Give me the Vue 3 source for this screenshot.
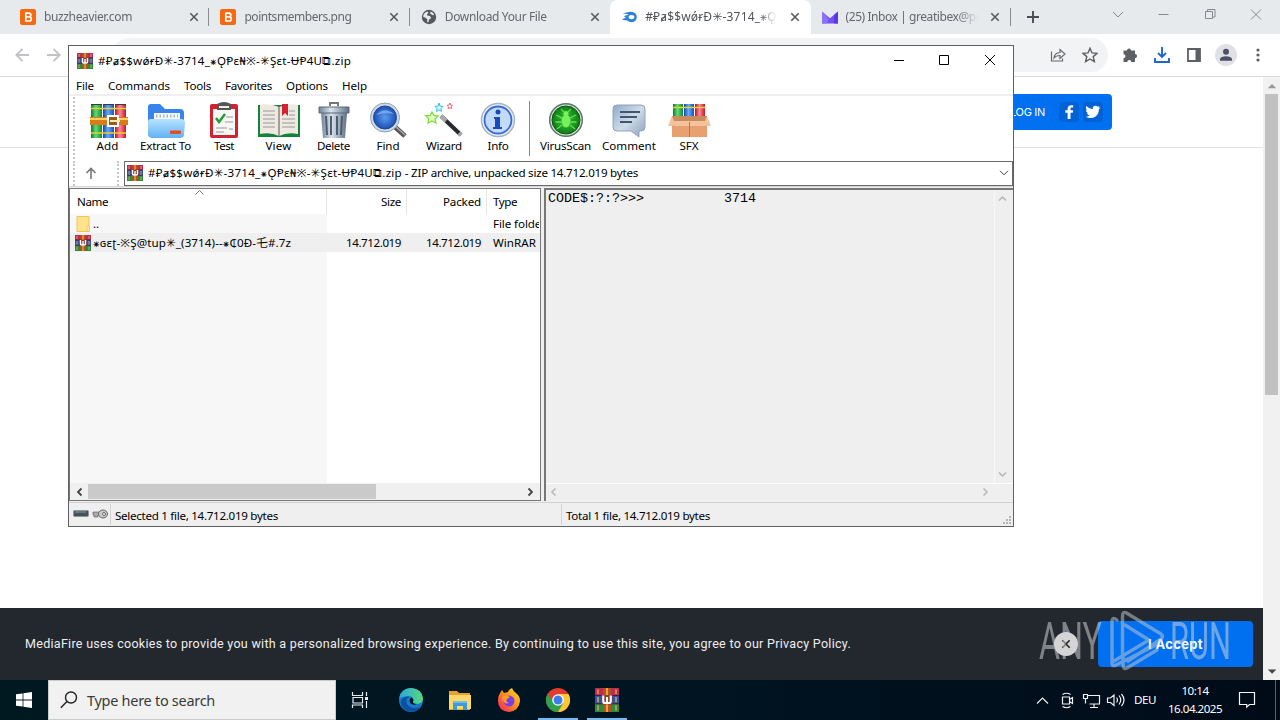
<script setup>
const archive = '#₽ⱥ$$wǿɍÐ✳-3714_⁕ǪⱣɛ₦※-✳Şɛt-ɄⱣ4U⧉.zip'
const tabs = [
  { title: 'buzzheavier.com', w: 88, icon: 'bz' },
  { title: 'pointsmembers.png', w: 107, icon: 'bz' },
  { title: 'Download Your File', w: 102, icon: 'globe' },
  { title: '#₽ⱥ$$wǿɍÐ✳-3714_⁕ǪⱣɛ', w: 145, icon: 'mf', active: true },
  { title: '(25) Inbox | greatibex@proton', w: 159, icon: 'mail' },
]
const menu = [['File', 18], ['Commands', 62], ['Tools', 27], ['Favorites', 47], ['Options', 42], ['Help', 25]]
const tools = [
  { t: 'Add', c: 't-add', w: 22 }, { t: 'Extract To', c: 't-extract', w: 51 },
  { t: 'Test', c: 't-test', w: 20 }, { t: 'View', c: 't-view', w: 26 },
  { t: 'Delete', c: 't-delete', w: 33 }, { t: 'Find', c: 't-find', w: 23 },
  { t: 'Wizard', c: 't-wizard', w: 36 }, { t: 'Info', c: 't-info', w: 21 },
  { sep: true, c: 't-sep' },
  { t: 'VirusScan', c: 't-virus', w: 51 }, { t: 'Comment', c: 't-comment', w: 54 },
  { t: 'SFX', c: 't-sfx', w: 19 },
]
// Spreads the letters of a label so that it fills the given width.
const fit = (el, { value }) => {
  el.style.letterSpacing = '0px'
  const natural = el.getBoundingClientRect().width
  el.style.letterSpacing = '1px'
  const count = el.getBoundingClientRect().width - natural
  el.style.letterSpacing = (value - natural) / Math.max(count, 1) + 'px'
}
const vFit = { mounted: fit }
</script>

<template>
  <div class="screen">
    <svg class="defs" width="0" height="0">
      <defs>
        <linearGradient id="gfold" x1="0" y1="0" x2="0" y2="1"><stop offset="0" stop-color="#b8e3ff" /><stop offset="1" stop-color="#62b2f6" /></linearGradient>
        <linearGradient id="gsteel" x1="0" y1="0" x2="1" y2="0"><stop offset="0" stop-color="#6f8296" /><stop offset=".4" stop-color="#dbe4ec" /><stop offset="1" stop-color="#5e7184" /></linearGradient>
        <linearGradient id="gcom" x1="0" y1="0" x2="1" y2="1"><stop offset="0" stop-color="#8fa9c8" /><stop offset=".5" stop-color="#cfdcea" /><stop offset="1" stop-color="#8aa0bb" /></linearGradient>
        <linearGradient id="gedge" x1="0" y1="0" x2="1" y2="0"><stop offset="0" stop-color="#2aa8e0" /><stop offset="1" stop-color="#57d878" /></linearGradient>
        <linearGradient id="gfire" x1="1" y1="0" x2="0" y2="1"><stop offset="0" stop-color="#ffe226" /><stop offset=".5" stop-color="#ff8a1e" /><stop offset="1" stop-color="#f5156c" /></linearGradient>
        <linearGradient id="gr" x1="0" y1="0" x2="1" y2="0"><stop offset="0" stop-color="#b80f2c" /><stop offset=".45" stop-color="#ff8a96" /><stop offset="1" stop-color="#c4122f" /></linearGradient>
        <linearGradient id="gg" x1="0" y1="0" x2="1" y2="0"><stop offset="0" stop-color="#0c7d26" /><stop offset=".45" stop-color="#63d97a" /><stop offset="1" stop-color="#0f8a2b" /></linearGradient>
        <linearGradient id="gb" x1="0" y1="0" x2="1" y2="0"><stop offset="0" stop-color="#1049ad" /><stop offset=".45" stop-color="#6aa8fa" /><stop offset="1" stop-color="#1350bd" /></linearGradient>
        <radialGradient id="glens"><stop offset="0" stop-color="#5c9bf0" /><stop offset="1" stop-color="#1c4fb5" /></radialGradient>
        <radialGradient id="ggreen"><stop offset="0" stop-color="#48d63c" /><stop offset="1" stop-color="#0a7a14" /></radialGradient>
      </defs>
      <symbol id="rar" viewBox="0 0 16 16">
        <rect y="0" width="16" height="5" fill="#c22b50" /><rect y="5" width="16" height="5.5" fill="#2f55a8" /><rect y="10.5" width="16" height="5.5" fill="#2c8a3b" />
        <path d="M0 5h16M0 10.5h16" stroke="#3b2340" stroke-width=".8" />
        <path d="M2 1v3M2 6v3.500M2 11.500v3.500M14 1v3M14 6v3.500M14 11.500v3.500" stroke="#d9a060" stroke-width="1" />
        <rect x="5.4" width="5.2" height="16" fill="#b4511d" /><path d="M8 0v16" stroke="#e9a33b" stroke-width="1.400" />
        <rect x="4.4" y="4.7" width="7.2" height="6.2" fill="#8c3a2c" /><path d="M5.5 5v3.8q0 1.2 1.3 1.2h2.4q1.3 0 1.3-1.2V5M8 6v3.5" fill="none" stroke="#fff" stroke-width="1.4" />
      </symbol>
      <symbol id="close" viewBox="0 0 10 10"><path d="M1.3 1.3l7.4 7.4M8.7 1.3l-7.4 7.4" stroke="currentColor" stroke-width="1.6" fill="none" /></symbol>
    </svg>

    <div class="chrome">
      <div class="tabstrip">
        <div v-for="(t, i) in tabs" :key="i" class="tab" :class="{ active: t.active, bare: i === 2 }">
          <svg v-if="t.icon === 'bz'" class="fav" viewBox="0 0 16 16"><rect width="16" height="16" rx="2" fill="#f6690f" /><path d="M5.8 4.2h3q2 0 2 1.8 0 1.5-1.5 1.8 2 .2 2 2.1 0 2.1-2.5 2.1h-3z" fill="none" stroke="#fff" stroke-width="1.7" /><path d="M6 7.9h3.5" stroke="#fff" stroke-width="1.5" /></svg>
          <svg v-else-if="t.icon === 'globe'" class="fav" viewBox="0 0 16 16"><circle cx="8" cy="8" r="7.2" fill="#55595e" /><path d="M2.6 5.2q1.6-2.4 4-2.8l.8 1.6-1.5 1.2.4 1.3 2.8.4 1 2.3-2 1.3-.7 2.7-1.3-.2.2-2.8-2.2-1.6-1.9-.6zM9.5 2.6q3 .8 3.8 3.7l-2-.3-2.2-1.6z" fill="#e7eaed" /></svg>
          <svg v-else-if="t.icon === 'mf'" class="fav" viewBox="0 0 16 16"><path d="M1.3 5.2Q5 2.6 9.7 2.7 15.6 3 15.8 8q-.2 5-5.3 5.2-2.7 0-4.4-1.8L.8 10.8Q3 9 5 8.7L3 7.3Q5.6 5.7 8 6L5.3 4.8Q3 4.6 1.3 5.2z" fill="#2c80dd" /><ellipse cx="10.5" cy="8.1" rx="2.9" ry="2.1" fill="#fff" /></svg>
          <svg v-else class="fav" viewBox="0 0 16 16"><path d="M0 2.5l8 6.8 8-6.8v12H0z" fill="#7250f2" /><path d="M0 2.5l6.8 7.8-2 4.2H0z" fill="#8d72fb" /><path d="M16 2.5v12h-4V6z" fill="#5838e5" /></svg>
          <div class="tabtext"><span v-fit="t.w">{{ t.title }}</span></div>
          <svg class="tabx"><use href="#close" /></svg>
        </div>
        <svg class="plus" viewBox="0 0 12 12"><path d="M6 0v12M0 6h12" stroke="#4a4e52" stroke-width="1.9" /></svg>
        <svg class="winctl" viewBox="0 0 160 20" fill="none" stroke="#85898d"><path d="M4 7l5 5 5-5M49.500 9.500h10" /><path d="M96.500 6.500h7v7h-7zM98.500 6.500v-2h7.500v7.500h-2.500" /><path d="M142 4.500l10 10M152 4.500l-10 10" /></svg>
      </div>

      <div class="toolbar">
        <svg class="nav" viewBox="0 0 48 16" fill="none" stroke="#c0c2c5" stroke-width="1.8"><path d="M14 8H1.500M7.500 1.800L1.300 8l6.200 6.200M32 8h12.500M38.500 1.800L44.700 8l-6.200 6.200" /></svg>
        <div class="omnibox">
          <svg class="o1" viewBox="0 0 16 16" fill="none" stroke="#65696d" stroke-width="1.2"><path d="M1.500 4.500v9.500h11v-2.500M4 11q.5-5 6-5.500V2.500l5 4.500-5 4.500V8.500Q6 8.500 4 11z" /></svg>
          <svg class="o2" viewBox="0 0 16 16" fill="none" stroke="#5b5f63" stroke-width="1.4"><path d="M8 1.200l2 4.700 5.100.4-3.900 3.300 1.200 5L8 12l-4.400 2.600 1.200-5L.9 6.300 6 5.900z" /></svg>
        </div>
        <svg class="ext" viewBox="0 0 16 16"><path d="M5 3.500a2 2 0 014 0h4V7a2.100 2.100 0 010 4.200V15H9.300a2 2 0 00-4 0H1.500v-3.800a2 2 0 000-4V3.500z" fill="#5c6065" /></svg>
        <svg class="dl" viewBox="0 0 16 16" fill="none" stroke="#1b66d2" stroke-width="1.9"><path d="M8 0v10M4 6l4 4 4-4M1 11v4h14v-4" /></svg>
        <svg class="side" viewBox="0 0 14 14"><path d="M1 1h12v12H1z" fill="none" stroke="#5c6065" stroke-width="1.8" /><path d="M8.500 1H13v12H8.500z" fill="#5c6065" /></svg>
        <div class="avatar"><svg viewBox="0 0 14 14"><circle cx="7" cy="3.800" r="3" fill="#4b5068" /><path d="M1 12.800v-2Q2 8.200 7 8.200t6 2.600v2z" fill="#4b5068" /></svg></div>
        <svg class="dots" viewBox="0 0 4 14" fill="#5c6065"><circle cx="2" cy="2" r="1.600" /><circle cx="2" cy="7" r="1.600" /><circle cx="2" cy="12" r="1.600" /></svg>
      </div>

      <div class="page">
        <div class="content">
          <div class="head">
            <div class="login"><span v-fit="35">LOG IN</span>
              <i class="soc s1"><svg viewBox="0 0 18 18"><path d="M10.500 16V9.800h2.300l.4-2.500h-2.700V5.800q0-1.200 1.300-1.200h1.400V2.300Q8 1.500 7.600 5.300v2H5.300v2.500h2.300V16z" fill="#fff" /></svg></i>
              <i class="soc"><svg viewBox="0 0 18 18"><path d="M16.500 4.800l-1.600 1.500Q15 11 11.600 13.500 7 16.500 1.500 13.800q2.600 0 4.200-1.300-2.300-.4-2.800-2.200h1.300Q1.800 9.400 1.900 7l1.300.4Q1 5.500 2.500 3.100 5.200 6.200 8.800 6.300 8.300 3 11.400 2.700q1.400 0 2.300 1l2-.8-1.200 1.700z" fill="#fff" /></svg></i>
            </div>
          </div>
          <div class="cookie">
            <span v-fit="826" class="ctext">MediaFire uses cookies to provide you with a personalized browsing experience. By continuing to use this site, you agree to our Privacy Policy.</span>
            <div class="cx"><svg><use href="#close" /></svg></div>
            <div class="accept"><b v-fit="55">I Accept</b></div>
          </div>
        </div>
        <div class="vbar">
          <svg viewBox="0 0 16 16"><path d="M4.500 10.500h8L8.500 6.500z" fill="#999" /></svg>
          <div class="vthumb"></div>
          <svg class="down" viewBox="0 0 16 16"><path d="M4.500 6h8l-4 4z" fill="#444" /></svg>
        </div>
      </div>
    </div>

    <div class="taskbar">
      <div class="start"><svg viewBox="0 0 16 16" fill="#fff"><path d="M0 2.300l6.600-.9v6.200H0zM7.400 1.300L16 0v7.600H7.400zM0 8.400h6.600v6.200L0 13.700zM7.400 8.400H16V16l-8.600-1.200z" /></svg></div>
      <div class="search"><svg viewBox="0 0 18 18" fill="none" stroke="#222" stroke-width="1.400"><circle cx="11" cy="6.500" r="5.500" /><path d="M7 10.500L.8 16.800" /></svg><span v-fit="128">Type here to search</span></div>
      <div class="task"><svg class="s18" viewBox="0 0 18 18" fill="none" stroke="#e8eaec" stroke-width="1.200"><path d="M1.500 1v3.500h10V1M2 6.500h9.500v5.500H2zM1.500 17v-3h10v3M15.500 1v4M15.500 10v7" /><path d="M14 7.500h3" stroke-width="3" /></svg></div>
      <div class="task"><svg class="s24" viewBox="0 0 24 24"><circle cx="12" cy="12" r="12" fill="#1679cc" /><path d="M.2 10Q2 .3 12 0q11 .6 12 10.500-.3 5.300-6 5.500-5.400 0-4-3 .8-4.500-4-4.700Q4 8.200.2 10z" fill="url(#gedge)" /><path d="M10.500 8.500Q6 11 8 16q3 5.500 13 3.300Q16 25.500 8 23 1 19.500 2 13q2-5 8.500-4.500z" fill="#0f4f9f" /><path d="M12 9.500q3.500 1 2 4-.5 2 3.500 2.500-2 1.500-5 0-3.500-2.500-.5-6.500z" fill="#001620" /></svg></div>
      <div class="task"><svg class="s24" viewBox="0 0 24 24"><path d="M1 3h8l2 2h11v17H1z" fill="#e8a32e" /><path d="M1 7h22v14H1z" fill="#ffd968" /><path d="M5 22v-9h14v9h-4v-4H9v4z" fill="#3c9bdb" /><path d="M5 13h14v2H5z" fill="#72bced" /></svg></div>
      <div class="task"><svg class="s24" viewBox="0 0 24 24"><path d="M3 5l2-3 2 3 4-1q1-3 4-4 1 3 4 5 4 3 4 8-1 10-11 11Q1 23 1 13q0-5 2-8z" fill="url(#gfire)" /><circle cx="12" cy="13" r="5.500" fill="#7b3fe0" /><path d="M5 9q4-3 8 0l-3 2q-2 3 2 4-6 2-7-6z" fill="#ff9d27" /></svg></div>
      <div class="task open"><svg class="s24" viewBox="0 0 24 24"><circle cx="12" cy="12" r="12" fill="#e33b2e" /><path d="M1.600 6A12 12 0 0012 24l5.200-9L12 12H6z" fill="#2da14c" /><path d="M12 24A12 12 0 0022.400 6H12l5.200 9z" fill="#fcc934" /><circle cx="12" cy="12" r="5.800" fill="#fff" /><circle cx="12" cy="12" r="4.500" fill="#3b7ded" /></svg></div>
      <div class="task open"><svg class="s24"><use href="#rar" /></svg></div>
      <svg class="tray" viewBox="0 0 92 20" fill="none" stroke="#eef0f2" stroke-width="1.200"><path d="M3 13.500l5.500-5.500 5.500 5.500" /><path d="M28.500 7h7v7h-7zM35.500 9.500l3-2v6l-3-2M28.500 4.500q4-2.500 8 0M28.500 16.500q4 2.500 8 0" /><path d="M53.500 5.500h12v8.500h-10M60 14v3M56 17.500h8M49.500 4.500h4v4h-4zM51.500 8.500v5" /><path d="M73.500 8h3l3.500-3v10.500l-3.500-3h-3zM82.500 7.500q2 2.500 0 5M85 5.500q3.500 4.500 0 9M87.500 4q5 6 0 12" /></svg>
      <span v-fit="22" class="lang">DEU</span>
      <div class="clock"><span v-fit="27">10:14</span><span v-fit="54">16.04.2025</span></div>
      <svg class="notif" viewBox="0 0 18 18" fill="none" stroke="#f2f4f5" stroke-width="1.200"><path d="M1.500 1.500h15v12h-5L8.700 16.200V13.500H1.500z" /></svg>
      <i class="peek"></i>
    </div>

    <div class="win">
      <div class="wtitle">
        <svg class="i16"><use href="#rar" /></svg><span v-fit="253">{{ archive }}</span>
        <svg class="wctl" viewBox="0 0 110 14" fill="none" stroke="#000"><path d="M3 7.500h10M48.500 2.500h9v9h-9zM94 2l10 10M104 2L94 12" /></svg>
      </div>
      <div class="menu"><div v-for="m in menu" :key="m[0]" class="mi"><span v-fit="m[1]">{{ m[0] }}</span></div></div>
      <div class="tools">
        <i class="grip"></i>
        <div v-for="(t, i) in tools" :key="i" class="tool" :class="t.c">
          <svg v-if="!t.sep" viewBox="0 0 44 36">
            <g v-if="t.t === 'Add'"><path d="M5 3h11v33H5z" fill="url(#gg)" /><path d="M17 3h11v33H17z" fill="url(#gb)" /><path d="M29 3h11v33H29z" fill="url(#gr)" /><path d="M5 2.500h11M17 2.500h11M29 2.500h11" stroke="#3a3a3a" /><path d="M5 6.500h35M5 31h35" stroke="#e9ce31" stroke-width="1.300" /><path d="M4 15h38v8H4z" fill="#d97b16" /><path d="M4 17h38" stroke="#ffce5c" stroke-width="2" /><path d="M22 14h10v10H22z" fill="#9b5a1d" stroke="#fff" stroke-width="2" /><path d="M24 19h10" stroke="#ffe9b0" stroke-width="2" /></g>
            <g v-else-if="t.t === 'Extract To'"><path d="M4 5q0-3 3-3h9l5 5h15q4 0 4 4v12H4z" fill="#3784ed" /><path d="M10 11h26v14H10z" fill="#f7f9fb" /><path d="M12 14h22" stroke="#aab5bf" stroke-width="3" stroke-dasharray="1.500 2" /><path d="M4 20q0-3 3-3h30q4 0 4 4l-1 12q0 3-4 3H8q-3 0-4-3z" fill="url(#gfold)" /><rect x="26" y="28.500" width="11" height="3.500" rx="1" fill="#e34c27" /></g>
            <g v-else-if="t.t === 'Test'"><rect x="8" y="2" width="28" height="34" rx="2" fill="#d2222f" /><path d="M11 7h22v26H11z" fill="#f7f7f5" /><path d="M15 2q7-4 14 0v6H15z" fill="#555" /><path d="M17 5h10" stroke="#eee" stroke-width="2" /><path d="M14 16l3 4 6-8" fill="none" stroke="#239b32" stroke-width="2.500" /><path d="M24 15h7M23 20h8M14 26h11M14 30h8M27 27h4" stroke="#999" /></g>
            <g v-else-if="t.t === 'View'"><path d="M1 3h42v32H1z" fill="#11833a" /><path d="M3 3q10-2 19 2 9-4 19-2v29q-11-2-19 2-8-4-19-2z" fill="#eeeae1" /><path d="M22 5v29" stroke="#86847e" stroke-width="1.500" /><path d="M6 9h12M6 13h12M6 17h12M6 21h12M6 25h12M25 17h13M25 21h13M25 25h13M32 9h6M32 13h6" stroke="#999" /><path d="M25 2h6v12l-3-3-3 3z" fill="#d8212f" /></g>
            <g v-else-if="t.t === 'Delete'"><path d="M9 11h26l-2 25H11z" fill="url(#gsteel)" /><path d="M14 14l1 19M19 14v19M25 14v19M30 14l-1 19" stroke="#4b5d70" stroke-width="2" /><path d="M7 5h30v6H7z" fill="url(#gsteel)" stroke="#5b6876" /><path d="M18 4V1h8v3" fill="none" stroke="#777" stroke-width="2" /></g>
            <g v-else-if="t.t === 'Find'"><path d="M29 25l10 9" stroke="#56575a" stroke-width="5" /><path d="M29 24l10 9" stroke="#aaa" stroke-width="1.500" /><circle cx="19" cy="15.500" r="14.500" fill="#cfd9e5" stroke="#93a0b0" /><circle cx="19" cy="15.500" r="11.500" fill="url(#glens)" stroke="#204a95" /><path d="M10 13q8-9 18-1-9-2-18 1z" fill="#9cc3f7" opacity=".6" /></g>
            <g v-else-if="t.t === 'Wizard'"><path d="M19 14l20 19" stroke="#292a2e" stroke-width="4" /><path d="M19 14l5 5M37 31l2 2" stroke="#aaa" stroke-width="4" /><path d="M10 10l2 3.500 4 .5-3 3 1 4-4-2-4 2 .6-4.400-3-3L8 13.500z" fill="#eaffc8" stroke="#78e13a" stroke-width="1.300" /><path d="M17 1l1 3 3 .4-2 2 .5 3-2.500-1.500L14.500 9.500 15 6.500l-2-2 3-.5z" fill="#d3f7ff" stroke="#34bfe9" /><path d="M28 1l.7 2 2 .4-1.400 1.300.3 2-1.600-1-2 1 .4-2L25 3.400l2-.4z" fill="#fff" stroke="#e66b7a" /></g>
            <g v-else-if="t.t === 'Info'"><circle cx="22" cy="18" r="16.500" fill="#edf2f8" stroke="#a6b3c5" stroke-width="1.500" /><circle cx="22" cy="18" r="13.500" fill="#c4dafb" stroke="#386bd0" stroke-width="1.800" /><circle cx="22" cy="10" r="2.500" fill="#174dbb" /><path d="M18 15h6v10h2v2h-9v-2h2v-8h-1z" fill="#174dbb" /></g>
            <g v-else-if="t.t === 'VirusScan'"><circle cx="22" cy="18" r="16.300" fill="#d4ddd6" stroke="#5f7865" stroke-width="1.500" /><circle cx="22" cy="18" r="14" fill="url(#ggreen)" stroke="#0a5517" /><path d="M22 4v28M8 18h28M12 8l20 20M32 8L12 28" stroke="#168d20" /><ellipse cx="22" cy="19" rx="4.500" ry="6.500" fill="#76f05b" /><circle cx="22" cy="11.500" r="2.500" fill="#76f05b" /><path d="M18 16l-6-3M26 16l6-3M17.500 20h-6M26.500 20h6M18 23l-5 4M26 23l5 4M20 10l-3-3M24 10l3-3" stroke="#62df4d" stroke-width="1.300" /></g>
            <g v-else-if="t.t === 'Comment'"><path d="M10 3h24q4 0 4 4v18q0 4-4 4h-2v6l-8-6H10q-4 0-4-4V7q0-4 4-4z" fill="url(#gcom)" stroke="#91a4bb" /><path d="M13 10h20M13 15h17M13 20h12" stroke="#43566f" stroke-width="1.800" /></g>
            <g v-else><path d="M6 2h10v15H6z" fill="url(#gg)" /><path d="M17 2h10v15H17z" fill="url(#gb)" /><path d="M28 2h10v15H28z" fill="url(#gr)" /><path d="M6 5.500h32" stroke="#e9ce31" stroke-width="1.500" /><path d="M5 14h35v21H5z" fill="#e8a071" /><path d="M5 14h35L38 20H7z" fill="#c98a5c" /><path d="M5 14L1 24h4l2-1h31l2 1h4L40 14l-2 5H7z" fill="#f3c29f" /><path d="M7 19h31v5H7z" fill="#f3c29f" /><path d="M22.500 20v15" stroke="#bd7447" /></g>
          </svg>
          <span v-if="!t.sep" v-fit="t.w">{{ t.t }}</span>
        </div>
      </div>
      <div class="addr">
        <i class="grip"></i>
        <svg class="up" viewBox="0 0 12 12" fill="none" stroke="#777" stroke-width="1.600"><path d="M6 12V1.500M1.500 6L6 1.500 10.500 6" /></svg>
        <i class="grip g2"></i>
        <div class="abox"><svg class="i16"><use href="#rar" /></svg><span v-fit="254">{{ archive }}</span><span v-fit="236"> - ZIP archive, unpacked size 14.712.019 bytes</span>
          <svg class="chev" viewBox="0 0 10 6" fill="none" stroke="#444"><path d="M1 .8l4 4 4-4" /></svg></div>
      </div>
      <div class="panes">
        <div class="list">
          <div class="row hdr"><div class="c1"><span v-fit="31">Name</span><svg class="sort" viewBox="0 0 9 5" fill="none" stroke="#777"><path d="M.5 4.500l4-4 4 4" /></svg></div><div class="c2"><span v-fit="20">Size</span></div><div class="c3"><span v-fit="38">Packed</span></div><div class="c4"><span v-fit="24">Type</span></div></div>
          <div class="row r1"><div class="c1"><svg class="i16" viewBox="0 0 16 16"><path d="M2 .5h12v15H2z" fill="#ffe289" stroke="#e9c75d" /><path d="M12 10h2.500v5.500H12z" fill="#ffe9a8" stroke="#dfbd55" stroke-width=".6" /></svg><span>..</span></div><div class="c2"></div><div class="c3"></div><div class="c4"><span v-fit="53">File folder</span></div></div>
          <div class="row r2"><div class="c1"><svg class="i16"><use href="#rar" /></svg><span v-fit="198">⁕ɢɛʈ-※Ş@tup✳_(3714)--⁕₵0Ð-乇#.7z</span></div><div class="c2"><span v-fit="55">14.712.019</span></div><div class="c3"><span v-fit="55">14.712.019</span></div><div class="c4"><span v-fit="43">WinRAR</span></div></div>
          <div class="fill"></div>
          <div class="hbar"><svg viewBox="0 0 18 16" fill="none" stroke="#444" stroke-width="1.800"><path d="M11.500 4.500L8 8l3.500 3.500" /></svg><i></i><svg class="end" viewBox="0 0 18 16" fill="none" stroke="#444" stroke-width="1.800"><path d="M6.500 4.500L10 8l-3.500 3.500" /></svg></div>
        </div>
        <div class="comment">
          <div class="ctop"><pre>CODE$:?:?&gt;&gt;&gt;          3714</pre><div class="cv"><svg viewBox="0 0 16 16" fill="none" stroke="#b4b4b4" stroke-width="1.500"><path d="M4 10.500L7.500 7l3.500 3.500" /></svg><svg viewBox="0 0 16 16" fill="none" stroke="#b4b4b4" stroke-width="1.500"><path d="M4 5.500L7.500 9 11 5.500" /></svg></div></div>
          <div class="ch"><svg viewBox="0 0 16 16" fill="none" stroke="#b8b8b8" stroke-width="1.500"><path d="M9.500 4.500L6 8l3.500 3.500" /></svg><svg viewBox="0 0 16 16" fill="none" stroke="#b8b8b8" stroke-width="1.500"><path d="M6.500 4.500L10 8l-3.500 3.500" /></svg></div>
        </div>
      </div>
      <div class="status">
        <svg class="drv" viewBox="0 0 36 12"><rect x=".5" y="2.500" width="15" height="6" rx="1" fill="#46525a" stroke="#8b9499" /><path d="M2 4h11" stroke="#8ba09a" /><path d="M20 4h8v3h-3v2h-4V7h-1z" fill="#aaa" stroke="#555" stroke-width=".6" /><ellipse cx="30" cy="6" rx="4.500" ry="4" fill="#ccc" stroke="#666" /><circle cx="31" cy="6" r="1.500" fill="#fff" stroke="#666" /></svg>
        <div class="st1"><span v-fit="163">Selected 1 file, 14.712.019 bytes</span></div>
        <div class="st2"><span v-fit="144">Total 1 file, 14.712.019 bytes</span></div>
        <svg class="sizer" viewBox="0 0 10 10" fill="#b5b5b5"><path d="M7 1h2v2H7zM4 4h2v2H4zM7 4h2v2H7zM1 7h2v2H1zM4 7h2v2H4zM7 7h2v2H7z" /></svg>
      </div>
    </div>

    <svg class="mark" viewBox="0 0 200 66">
      <g class="mt"><text x="3" y="52" textLength="63" lengthAdjust="spacingAndGlyphs">ANY</text><text x="134" y="52" textLength="61" lengthAdjust="spacingAndGlyphs">RUN</text></g>
      <path d="M81 13Q76 9 76 15V56q0 4 4 2L120 38M86.500 48V9q0-5 4-3L125 27q3 2.500 0 5L92 54M89 18L113 33 78 54M87 50v7q0 6 4 4l30-18" fill="none" stroke="#bfc9d6" stroke-width="3.400" stroke-linejoin="round" stroke-linecap="round" />
    </svg>
  </div>
</template>

<style>
html, body { overflow: hidden; }
</style>
<style scoped>
* { box-sizing: border-box; }
.screen { position: relative; width: 1280px; height: 720px; overflow: hidden; background: #fff; font: 11.600px/16px "Noto Sans", "DejaVu Sans", "Noto Sans CJK SC", sans-serif; color: #111; }
span, b, pre { white-space: pre; flex: none; }
svg { display: block; flex: none; }
.defs { position: absolute; }
.chrome { height: 680px; display: flex; flex-direction: column; }
.tabstrip { height: 34px; background: #e7eaed; display: flex; align-items: center; padding-left: 9px; flex: none; }
.tab { width: 200.4px; height: 34px; display: flex; align-items: center; padding: 0 9px 0 11px; color: #64686c; position: relative; font-size: 12px; }
.tab::after { content: ""; width: 1px; height: 18px; background: #888c90; position: absolute; right: 0; top: 8px; }
.tab.active::after, .tab.bare::after { display: none; }
.tab.active { background: #fff; border-radius: 8px 8px 0 0; color: #505458; }
.fav { width: 16px; height: 16px; }
.tabtext { margin-left: 8px; width: 132px; overflow: hidden; -webkit-mask-image: linear-gradient(90deg, #000 85%, transparent); mask-image: linear-gradient(90deg, #000 85%, transparent); height: 18px; display: flex; align-items: center; }
.tabx { width: 10px; height: 10px; margin-left: auto; margin-right: 1.500px; color: #55595d; }
.plus { width: 12px; height: 12px; margin-left: 16px; }
.winctl { width: 160px; height: 20px; margin-left: 70px; margin-top: -4px; }
.toolbar { height: 43px; border-bottom: 1px solid #d9dbdd; display: flex; align-items: center; padding-left: 15px; flex: none; }
.nav { width: 48px; height: 16px; }
.omnibox { margin-left: 49px; width: 996px; height: 34px; border-radius: 17px; background: #f1f3f4; display: flex; align-items: center; justify-content: flex-end; padding-right: 10px; gap: 16px; }
.o1, .o2 { width: 16px; height: 16px; }
.ext { width: 16px; height: 16px; margin-left: 14px; }
.dl { width: 16px; height: 16px; margin-left: 16px; }
.side { width: 14px; height: 14px; margin-left: 17px; }
.avatar { width: 22px; height: 22px; border-radius: 50%; background: #dfe1e6; margin-left: 14px; display: flex; align-items: center; justify-content: center; }
.avatar svg { width: 14px; height: 14px; }
.dots { width: 4px; height: 14px; margin-left: 19px; }
.page { flex: 1; display: flex; min-height: 0; }
.content { width: 1263px; display: flex; flex-direction: column; justify-content: space-between; }
.head { height: 71px; border-bottom: 1px solid #dfe1e3; display: flex; justify-content: flex-end; padding: 17px 151px 0 0; }
.login { width: 170px; height: 36px; background: #0070f0; border-radius: 4px; color: #fff; display: flex; align-items: center; justify-content: flex-end; font: 11px/16px Inter, sans-serif; padding-right: 9px; }
.soc { width: 20px; height: 20px; background: #0062d4; border-radius: 3px; margin-left: 4px; display: flex; align-items: center; justify-content: center; }
.soc svg { width: 18px; height: 18px; }
.s1 { margin-left: 14px; }
.cookie { height: 72px; background: #23282f; display: flex; align-items: center; padding: 0 10px 0 25px; color: #eee; }
.ctext { font: 12.500px/16px Roboto, "Liberation Sans", sans-serif; }
.cx { width: 24px; height: 24px; border-radius: 50%; background: #d4d4d4; margin-left: auto; margin-right: 20px; display: flex; align-items: center; justify-content: center; color: #222; }
.cx svg { width: 10px; height: 10px; }
.accept { width: 155px; height: 46px; border-radius: 4px; background: #0070f0; display: flex; align-items: center; justify-content: center; color: #fff; font: 13px/16px Inter, sans-serif; }
.vbar { width: 17px; background: #f1f1f1; display: flex; flex-direction: column; }
.vbar svg { width: 17px; height: 17px; }
.vthumb { height: 301px; margin: 0 2px; background: #c1c1c1; }
.down { margin-top: auto; }
.taskbar { height: 40px; background: linear-gradient(90deg, #001820, #001421 55%, #010b18); display: flex; align-items: center; color: #fff; }
.start { width: 48px; display: flex; justify-content: center; }
.start svg { width: 16px; height: 16px; }
.search { width: 288px; height: 40px; background: #f1f1f1; border: 1px solid #c9cccd; display: flex; align-items: center; padding-left: 11px; color: #3a3a3a; font-size: 14.500px; }
.search svg { width: 18px; height: 18px; margin-right: 9px; }
.task { width: 40px; height: 40px; margin-right: 9px; display: flex; align-items: center; justify-content: center; border-bottom: 2px solid transparent; padding-top: 1px; }
.search + .task { margin-left: 4px; margin-right: 11px; }
.open { border-bottom-color: #76b9ed; }
.s18 { width: 18px; height: 18px; }
.s24 { width: 24px; height: 24px; }
.tray { width: 92px; height: 20px; margin-left: auto; margin-right: 8px; }
.lang { margin-right: 12px; }
.clock { width: 54px; display: flex; flex-direction: column; align-items: center; line-height: 18px; }
.notif { width: 18px; height: 18px; margin-left: 16px; margin-right: 19px; }
.peek { width: 1px; height: 40px; background: #56616a; margin-right: 4px; }
.win { position: absolute; left: 68px; top: 45px; width: 946px; height: 482px; border: 1px solid #5f6063; background: #fff; color: #000; display: flex; flex-direction: column; }
.i16 { width: 16px; height: 16px; margin-right: 5px; }
.wtitle { height: 30px; display: flex; align-items: center; padding-left: 8px; flex: none; }
.wctl { width: 110px; height: 14px; margin-left: auto; margin-right: 12px; margin-top: -2px; }
.menu { height: 20px; display: flex; align-items: center; gap: 14px; padding: 2px 0 0 7px; border-bottom: 2px solid #efefef; flex: none; }
.mi { display: flex; }
.tools { height: 64px; display: flex; flex: none; align-items: center; padding-left: 4px; }
.grip { width: 0; height: 62px; border-left: 2px dotted #c5c5c5; flex: none; }
.tool { display: flex; flex-direction: column; align-items: center; width: 55px; height: 58px; padding-top: 3px; }
.tool svg { width: 44px; height: 36px; }
.tool span { margin-top: 0; }
.t-add { margin-left: 5px; }
.t-extract { width: 61px; } .t-test { width: 56px; } .t-view { width: 53px; } .t-delete { width: 57px; } .t-find { width: 52px; }
.t-wizard { width: 60px; } .t-info { width: 48px; } .t-virus { width: 59px; } .t-comment { width: 68px; } .t-sfx { width: 52px; }
.t-sep { width: 1px; background: #888; margin: 0 6px 0 7px; height: 55px; }
.addr { height: 26px; display: flex; align-items: center; padding-left: 4px; flex: none; }
.addr .grip { height: 25px; }
.up { width: 12px; height: 12px; margin-left: 10px; }
.addr .g2 { margin-left: 20px; }
.abox { flex: 1; margin-left: 5px; height: 25px; border: 1px solid #6a6a6a; display: flex; align-items: center; padding-left: 2px; }
.chev { width: 10px; height: 6px; margin-left: auto; margin-right: 3px; }
.panes { height: 316px; background: #efefef; border-top: 1px solid #d5d5d5; display: flex; flex: none; padding-top: 1px; }
.list { width: 472px; height: 313px; border: 1px solid #777; background: #fff; display: flex; flex-direction: column; overflow: hidden; }
.row { display: flex; height: 19px; align-items: center; flex: none; overflow: hidden; }
.row.hdr { height: 25px; }
.c1, .c2, .c3, .c4 { display: flex; align-items: center; height: 100%; flex: none; }
.c1 { width: 257px; padding-left: 5px; position: relative; }
.c1 .i16 { margin-right: 2px; }
.c2 { width: 80px; justify-content: flex-end; padding-right: 6px; }
.c3 { width: 80px; justify-content: flex-end; padding-right: 6px; }
.hdr .c2, .hdr .c3 { padding-right: 5px; }
.c4 { width: 52px; padding-left: 6px; overflow: hidden; }
.hdr .c1 { padding-left: 7px; }
.hdr .c1, .hdr .c2, .hdr .c3 { border-right: 1px solid #e5e5e5; }
.sort { position: absolute; left: 125px; top: 1px; width: 9px; height: 5px; }
.r1 .c1 { background: #f7f7f7; }
.r2 { background: #efefef; }
.fill { flex: 1; width: 257px; background: #f7f7f7; }
.hbar { height: 17px; background: #f0f0f0; display: flex; align-items: center; flex: none; }
.hbar svg { width: 18px; height: 16px; }
.hbar i { width: 288px; height: 15px; background: #cacaca; }
.hbar .end { margin-left: auto; }
.comment { margin-left: 3px; width: 469px; height: 313px; border: 1px solid #777; border-width: 2px 0 0 2px; border-color: #777; background: #efefef; display: flex; flex-direction: column; }
.ctop { flex: 1; display: flex; justify-content: space-between; border-bottom: 1px solid #fff; }
pre { margin: 1px 0 0 2px; font: 13.330px/16px "Liberation Mono", monospace; }
.cv { width: 19px; border-left: 1px solid #f8f8f8; display: flex; flex-direction: column; justify-content: space-between; }
.cv svg, .ch svg { width: 16px; height: 16px; }
.ch { height: 17px; display: flex; justify-content: space-between; padding-right: 20px; }
.status { flex: 1; background: #efefef; border-top: 1px solid #d2d2d2; display: flex; align-items: center; padding-left: 4px; }
.drv { width: 36px; height: 12px; margin-top: -2px; }
.st1 { width: 451px; margin-left: 1px; padding-left: 4px; border-left: 1px solid #d4d4d4; height: 21px; display: flex; align-items: center; padding-top: 2px; }
.st2 { padding-left: 4px; border-left: 1px solid #d4d4d4; height: 21px; display: flex; align-items: center; padding-top: 2px; }
.sizer { width: 10px; height: 10px; margin: 10px 1px 0 auto; }
.mark { position: absolute; left: 1036px; top: 607px; width: 200px; height: 66px; opacity: .52; }
.mt { font: 400 52px Roboto, sans-serif; fill: #d4d7dc; }
</style>
